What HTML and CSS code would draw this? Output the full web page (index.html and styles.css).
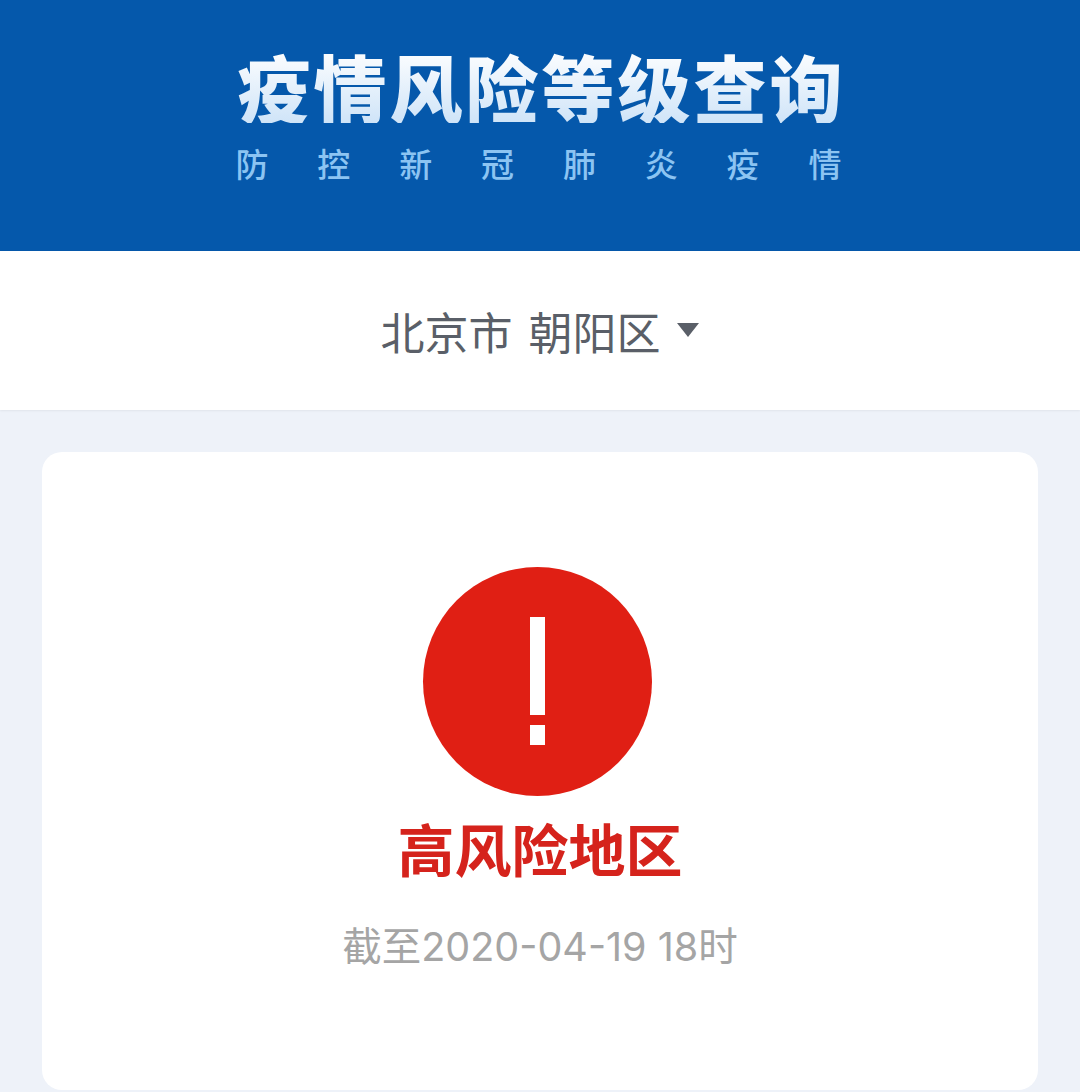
FILE: index.html
```html
<!DOCTYPE html>
<html lang="zh-CN">
<head>
    <meta charset="UTF-8">
    <meta name="viewport" content="width=device-width, initial-scale=1.0">
    <title>疫情风险等级查询</title>
    <link rel="stylesheet" href="styles.css">
</head>
<body>
    <div class="header">
        <h1 class="title">疫情风险等级查询</h1>
        <div class="subtitle">
            <span>防</span><span>控</span><span>新</span><span>冠</span><span>肺</span><span>炎</span><span>疫</span><span>情</span>
        </div>
    </div>

    <div class="picker">
        <span class="picker-text">北京市 朝阳区</span>
        <span class="caret"></span>
    </div>

    <div class="content">
        <div class="card">
            <div class="alert-icon">
                <span class="bar"></span>
                <span class="dot"></span>
            </div>
            <div class="level">高风险地区</div>
            <div class="date">截至2020-04-19 18时</div>
        </div>
    </div>
</body>
</html>
```

FILE: styles.css
```css
html, body {
    margin: 0;
    padding: 0;
}
body {
    width: 1080px;
    height: 1092px;
    overflow: hidden;
    background-color: #eef2f9;
    font-family: "Noto Sans CJK SC", "Liberation Sans", sans-serif;
}
.header {
    height: 251px;
    box-sizing: border-box;
    padding-top: 47px;
    background-color: #0558ab;
    display: flex;
    flex-direction: column;
    align-items: center;
}
.title {
    margin: 0;
    padding-left: 3px;
    font-size: 73px;
    line-height: 76px;
    letter-spacing: 3px;
    font-weight: 900;
    white-space: nowrap;
    color: #e3f0fc;
    background: linear-gradient(#ffffff, #cfe4f8);
    -webkit-background-clip: text;
    background-clip: text;
    -webkit-text-fill-color: transparent;
}
.subtitle {
    width: 606px;
    margin-top: 20px;
    margin-right: 3px;
    display: flex;
    justify-content: space-between;
    font-size: 33px;
    line-height: 40px;
    font-weight: 500;
    color: #8cc4f2;
}
.picker {
    height: 159px;
    background-color: white;
    box-shadow: 0 1px 2px rgba(0, 0, 0, 0.06);
    display: flex;
    justify-content: center;
    align-items: center;
    gap: 17px;
}
.picker-text {
    font-size: 44px;
    word-spacing: 6px;
    color: #5a5f68;
    white-space: pre;
}
.caret {
    width: 0;
    height: 0;
    margin-top: -2px;
    border-left: 11px solid transparent;
    border-right: 11px solid transparent;
    border-top: 14px solid #5a5f68;
}
.content {
    padding: 42px 42px 0;
}
.card {
    height: 638px;
    box-sizing: border-box;
    padding-top: 115px;
    background: white;
    border-radius: 20px;
    display: flex;
    flex-direction: column;
    align-items: center;
}
.alert-icon {
    width: 229px;
    height: 229px;
    margin-right: 5px;
    box-sizing: border-box;
    padding-top: 50px;
    border-radius: 50%;
    background-color: #e01f14;
    display: flex;
    flex-direction: column;
    align-items: center;
    gap: 10px;
}
.bar {
    width: 15px;
    height: 98px;
    background: white;
}
.dot {
    width: 15px;
    height: 20px;
    background: white;
}
.level {
    margin-top: 13px;
    font-size: 57px;
    line-height: 76px;
    font-weight: 700;
    color: #d5231c;
}
.date {
    margin-top: 37px;
    font-family: Inter, "Noto Sans CJK SC", sans-serif;
    font-size: 39.5px;
    line-height: 50px;
    color: #a5a5a5;
}
```
